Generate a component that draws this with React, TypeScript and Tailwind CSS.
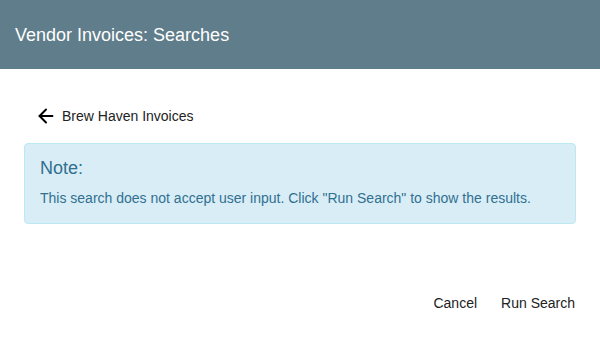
import { ArrowLeft } from 'lucide-react'

export default function App() {
  return (
    <div className="w-[600px] h-[338px] bg-white flex flex-col font-['Liberation_Sans',Arial,sans-serif]">
      <header className="h-[69px] bg-[#607d8b] flex items-center px-[15px] shrink-0">
        <h1 className="text-white text-[18px] leading-none">Vendor Invoices: Searches</h1>
      </header>
      <main className="flex-1 flex flex-col px-[24px]">
        <button className="flex items-center gap-[5px] mt-[36px] ml-[11px] text-[14px] text-[#222]">
          <ArrowLeft size={22} strokeWidth={2.2} className="text-black" />
          <span>Brew Haven Invoices</span>
        </button>
        <div className="mt-[16px] h-[81px] rounded-[4px] border border-[#bce8f1] bg-[#d9edf7] text-[#31708f] px-[15px] pt-[13px]">
          <div className="text-[18px] leading-[22px]">Note:</div>
          <p className="mt-[10px] text-[14px] leading-[18px]">
            This search does not accept user input. Click "Run Search" to show the results.
          </p>
        </div>
        <div className="flex-1" />
        <footer className="flex justify-end gap-[24px] pb-[24px] pr-[1px] text-[14px] text-[#222]">
          <button>Cancel</button>
          <button>Run Search</button>
        </footer>
      </main>
    </div>
  )
}
